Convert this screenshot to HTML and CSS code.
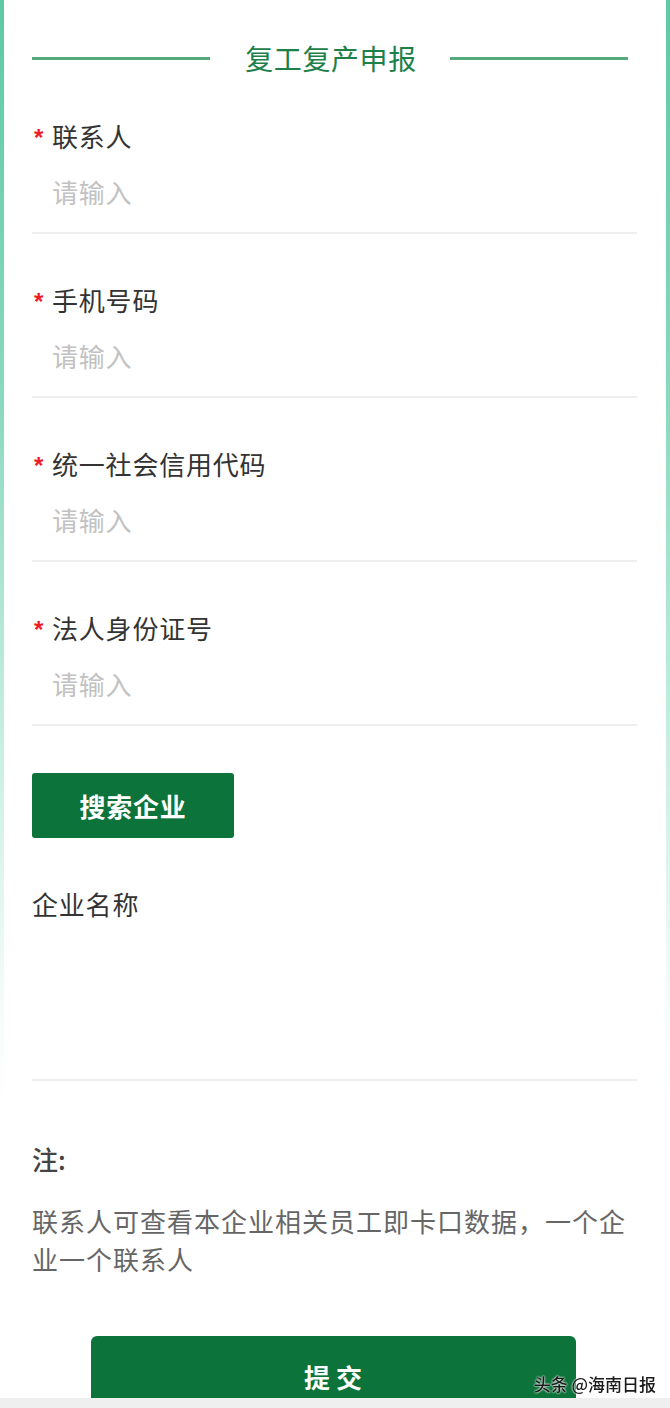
FILE: index.html
```html
<!DOCTYPE html>
<html lang="zh-CN">
<head>
<meta charset="utf-8">
<title>复工复产申报</title>
<link rel="stylesheet" href="styles.css">
</head>
<body>
<div class="card">
  <div class="title-row">
    <span class="title-line"></span>
    <h1 class="title">复工复产申报</h1>
    <span class="title-line"></span>
  </div>

  <div class="field">
    <div class="label"><span class="star">*</span>联系人</div>
    <div class="input">请输入</div>
  </div>
  <div class="field">
    <div class="label"><span class="star">*</span>手机号码</div>
    <div class="input">请输入</div>
  </div>
  <div class="field">
    <div class="label"><span class="star">*</span>统一社会信用代码</div>
    <div class="input">请输入</div>
  </div>
  <div class="field">
    <div class="label"><span class="star">*</span>法人身份证号</div>
    <div class="input">请输入</div>
  </div>

  <button class="search-btn">搜索企业</button>

  <div class="company">
    <div class="company-label">企业名称</div>
    <div class="company-box"></div>
  </div>
</div>

<div class="note">
  <div class="note-title">注:</div>
  <p class="note-text">联系人可查看本企业相关员工即卡口数据，一个企业一个联系人</p>
</div>

<div class="submit-wrap">
  <button class="submit-btn">提 交</button>
</div>

<div class="bottom-bar"></div>
<div class="watermark">头条 @海南日报</div>
</body>
</html>
```

FILE: styles.css
```css
html, body {
  margin: 0;
  padding: 0;
  background: #ffffff;
  overflow: hidden;
}
body {
  font-family: "Noto Sans CJK SC", "Noto Sans", sans-serif;
  color: #333;
  font-size: 26px;
}
.card {
  border-style: solid;
  border-width: 0 4px;
  border-image: linear-gradient(to bottom, #5ccaa4 0, #8ad9bd 400px, #c9efe1 750px, #f4fcf9 1000px, #ffffff 1110px) 1;
  padding: 38px 29px 38px 28px;
}
.title-row {
  display: flex;
  align-items: center;
  height: 40px;
  padding-right: 9px;
}
.title-line {
  flex: 1;
  height: 3px;
  background: #56a97c;
}
.title {
  margin: 0 33px 0 35px;
  font-size: 28px;
  font-weight: normal;
  color: #1e8049;
  line-height: 40px;
  letter-spacing: 0.6px;
}
.field {
  margin-top: 46px;
  padding-bottom: 20px;
  border-bottom: 2px solid #eeeeee;
}
.title-row + .field {
  margin-top: 38px;
}
.label {
  position: relative;
  padding-left: 20px;
  line-height: 40px;
  letter-spacing: 0.8px;
  color: #333;
}
.star {
  position: absolute;
  left: 2px;
  top: 2px;
  color: #ee1b24;
  font-size: 24px;
  font-weight: bold;
  font-family: "Liberation Sans", sans-serif;
}
.input {
  margin-top: 16px;
  padding-left: 20px;
  line-height: 40px;
  color: #c2c2c2;
  letter-spacing: 0.8px;
}
.search-btn {
  display: block;
  margin-top: 47px;
  width: 202px;
  height: 65px;
  border: 0;
  border-radius: 3px;
  background: #0c733a;
  color: #fff;
  font-family: inherit;
  font-size: 26px;
  font-weight: bold;
  letter-spacing: 0.8px;
}
.company {
  margin-top: 46px;
  border-bottom: 2px solid #eeeeee;
}
.company-label {
  line-height: 40px;
  color: #333;
  letter-spacing: 0.8px;
}
.company-box {
  height: 155px;
}
.note {
  padding: 20px 33px 0 32px;
}
.note-title {
  line-height: 40px;
  font-weight: 500;
  color: #444;
}
.note-text {
  margin: 23px 0 0;
  line-height: 38px;
  color: #666;
  letter-spacing: 1px;
}
.submit-wrap {
  display: flex;
  justify-content: center;
  padding: 58px 0 0 0;
  margin-right: 4px;
}
.submit-btn {
  width: 485px;
  height: 80px;
  border: 0;
  border-radius: 6px;
  background: #0c733a;
  color: #fff;
  font-family: inherit;
  font-size: 26px;
  font-weight: bold;
}
.bottom-bar {
  position: fixed;
  left: 0;
  right: 0;
  bottom: 0;
  height: 10px;
  background: #efefef;
}
.watermark {
  position: fixed;
  right: 14px;
  bottom: 13px;
  font-size: 17px;
  font-weight: 500;
  line-height: 22px;
  color: #1a1a1a;
  text-shadow: 0 0 2px #fff, 0 0 2px #fff;
}
```
